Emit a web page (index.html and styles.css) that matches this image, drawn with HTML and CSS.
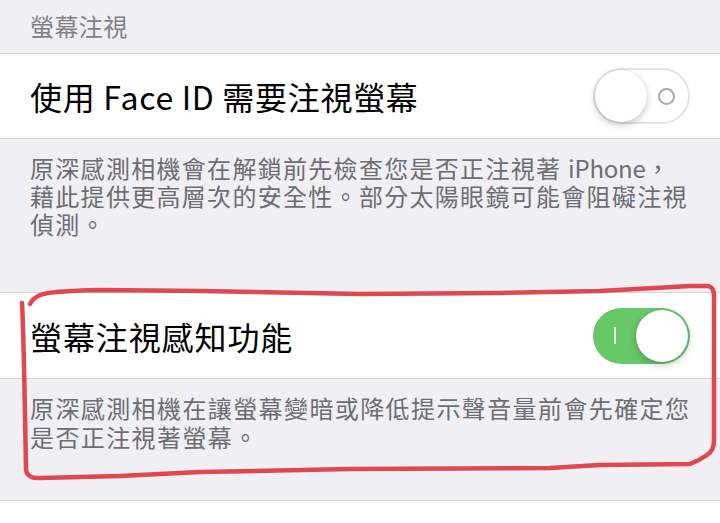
FILE: index.html
```html
<!DOCTYPE html>
<html lang="zh-Hant">
<head>
<meta charset="utf-8">
<title>螢幕注視</title>
<link rel="stylesheet" href="styles.css">
</head>
<body>
<div class="page">
  <div class="group-header">螢幕注視</div>
  <div class="cell">
    <div class="cell-label">使用 Face ID 需要注視螢幕</div>
    <div class="switch switch-off">
      <span class="knob"></span>
      <span class="off-mark"></span>
    </div>
  </div>
  <div class="footer footer-one">原深感測相機會在解鎖前先檢查您是否正注視著 <span class="latin">iPhone</span>，<br>藉此提供更高層次的安全性。部分太陽眼鏡可能會阻礙注視<br>偵測。</div>
  <div class="cell cell-two">
    <div class="cell-label wide">螢幕注視感知功能</div>
    <div class="switch switch-on">
      <span class="on-mark"></span>
      <span class="knob"></span>
    </div>
  </div>
  <div class="footer footer-two">原深感測相機在讓螢幕變暗或降低提示聲音量前會先確定您<br>是否正注視著螢幕。</div>
  <div class="tail"></div>
  <svg class="annotation" width="720" height="523" viewBox="0 0 720 523">
    <path d="M22 303 C24 340 25 420 26 468 Q26 479 40 478 L120 476 L200 472 L350 469 L550 468 L600 465 L690 464 Q700 460 707 455 Q714 451 714 440 L714 300 Q715 287 708 286 L690 286 L600 291 L500 293 L360 294 L200 291 L100 290 Q50 291 40 295 Q32 299 30 304" fill="none" stroke="#e1474f" stroke-width="4.5" stroke-linecap="round" stroke-linejoin="round"/>
  </svg>
</div>
</body>
</html>
```
FILE: styles.css
```css
* { box-sizing: border-box; }
html, body { margin: 0; padding: 0; }
body {
  background: #efeff4;
  font-family: "Noto Sans CJK TC", "Noto Sans", sans-serif;
}
.page {
  position: relative;
  width: 720px;
  height: 523px;
  overflow: hidden;
  background: #efeff4;
}
.group-header {
  height: 53px;
  padding: 11px 0 0 30px;
  font-size: 24px;
  line-height: 30px;
  color: #808085;
  letter-spacing: 0.4px;
}
.cell {
  display: flex;
  align-items: center;
  justify-content: space-between;
  height: 86px;
  padding: 0 30px;
  background: #fff;
  border-top: 1px solid #d6d6db;
  border-bottom: 1px solid #d6d6db;
}
.cell-two {
  height: 87px;
}
.cell-label {
  font-size: 32px;
  line-height: 40px;
  color: #000;
  white-space: nowrap;
  letter-spacing: 0.7px;
}
.cell-label.wide {
  letter-spacing: 0.9px;
}
.switch {
  display: flex;
  align-items: center;
  width: 97px;
  height: 56px;
  border-radius: 28px;
  padding: 2px;
}
.switch-off {
  background: #fff;
  border: 2px solid #e4e4e8;
  padding: 0;
}
.switch-on {
  background: #66c867;
  justify-content: space-between;
  padding: 2px 2px 2px 21px;
}
.knob {
  display: block;
  width: 52px;
  height: 52px;
  border-radius: 50%;
  background: #fff;
  box-shadow: 0 3px 7px rgba(0, 0, 0, 0.22), 0 0 1px rgba(0, 0, 0, 0.15);
}
.off-mark {
  display: block;
  width: 17px;
  height: 17px;
  margin-left: 11px;
  border: 2px solid #a9a9ad;
  border-radius: 50%;
}
.on-mark {
  display: block;
  width: 2px;
  height: 17px;
  background: #e9f8e9;
}
.footer {
  color: #6d6d72;
  font-size: 24px;
  white-space: nowrap;
  padding-left: 30px;
}
.footer-one {
  height: 153px;
  padding-top: 15px;
  line-height: 28px;
  letter-spacing: 1.3px;
}
.footer-one .latin {
  letter-spacing: -0.2px;
}
.footer-two {
  height: 121px;
  padding-top: 14px;
  line-height: 29px;
  letter-spacing: 1.4px;
}
.tail {
  height: 30px;
  background: #fff;
  border-top: 1px solid #d6d6db;
}
.annotation {
  position: absolute;
  left: 0;
  top: 0;
  pointer-events: none;
}
```
